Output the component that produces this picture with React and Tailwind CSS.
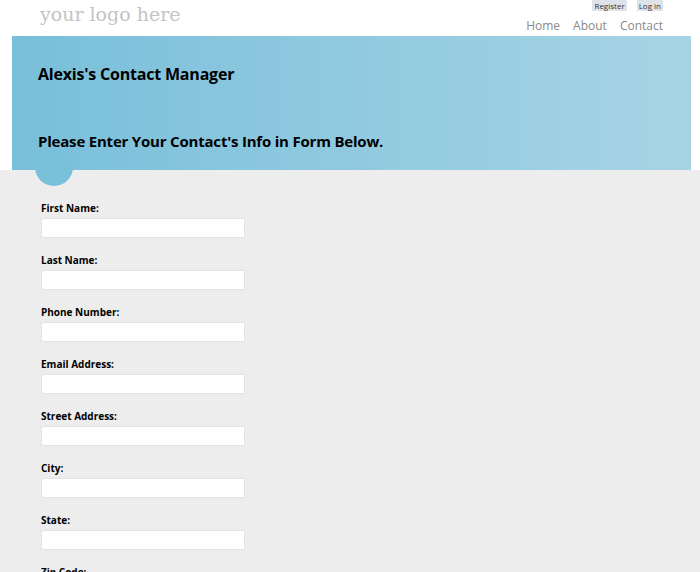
export default function App() {
  const fields = [
    "First Name:",
    "Last Name:",
    "Phone Number:",
    "Email Address:",
    "Street Address:",
    "City:",
    "State:",
    "Zip Code:",
  ];

  return (
    <div
      className="w-[700px] h-[572px] overflow-hidden bg-white"
      style={{ fontFamily: '"Open Sans", "Noto Sans", sans-serif' }}
    >
      {/* HEADER */}
      <div className="h-[36px] flex justify-between">
        <div
          className="pl-[40px] pt-[2px] text-[19px] leading-[24px] text-[#c4c4c4]"
          style={{ fontFamily: '"DejaVu Serif", serif' }}
        >
          your logo here
        </div>
        <div className="flex flex-col items-end pr-[37px]">
          <div className="flex gap-[10px] text-[8px] leading-[11px] text-[#333]">
            <span className="bg-[#dde3e8] px-[2px]">Register</span>
            <span className="bg-[#dde3e8] px-[2px]">Log in</span>
          </div>
          <div className="flex gap-[13px] mt-[7px] text-[12px] leading-[16px] text-[#8a8a8a]">
            <span>Home</span>
            <span>About</span>
            <span>Contact</span>
          </div>
        </div>
      </div>

      {/* BANNER */}
      <div className="relative ml-[12px] mr-[9px] h-[134px] bg-gradient-to-r from-[#78bfda] to-[#a7d4e5] pl-[26px]">
        <h1 className="pt-[27px] text-[16px] leading-[22px] font-bold text-black tracking-[-0.2px]">
          Alexis's Contact Manager
        </h1>
        <h2 className="pt-[46px] text-[15px] leading-[20px] font-bold text-black tracking-[-0.2px]">
          Please Enter Your Contact's Info in Form Below.
        </h2>
        <div className="absolute left-[23px] top-[112px] w-[38px] h-[38px] rounded-full bg-[#79c0da]" />
      </div>

      {/* FORM */}
      <div className="bg-[#ededed] h-[402px] pl-[41px] pt-[31px]">
        {fields.map((f) => (
          <div key={f} className="h-[52px]">
            <div className="text-[10px] leading-[14px] font-bold text-black">{f}</div>
            <div className="mt-[3px] w-[204px] h-[20px] bg-white border border-[#e3e3e3]" />
          </div>
        ))}
      </div>
    </div>
  );
}
